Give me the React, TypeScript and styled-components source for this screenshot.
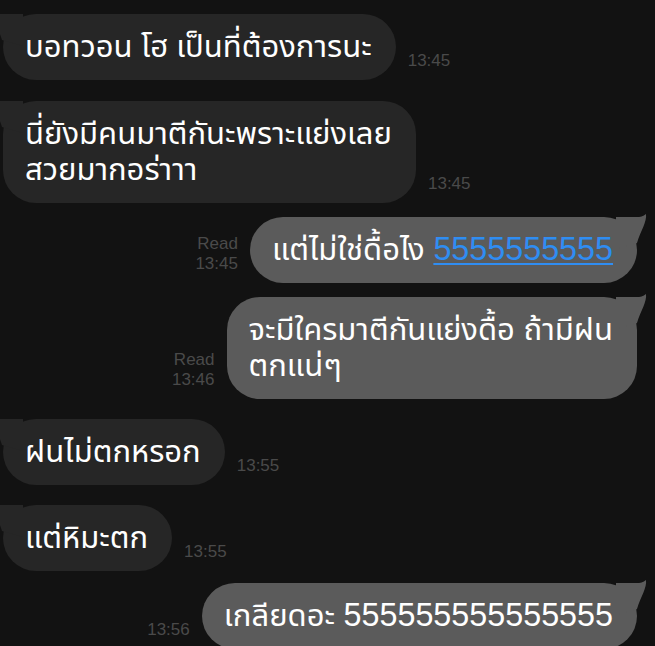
import React from "react";
import styled, { createGlobalStyle } from "styled-components";

const GlobalStyle = createGlobalStyle`
  html, body {
    margin: 0;
    padding: 0;
    background: #121212;
    overflow: hidden;
  }
  body {
    font-family: "Liberation Sans", "Noto Sans Thai", "Thonburi", "Loma", "Garuda", "Noto Sans", sans-serif;
  }
`;

const Chat = styled.div`
  display: flex;
  flex-direction: column;
  padding-top: 14px;
  width: 655px;
  height: 646px;
  box-sizing: border-box;
  overflow: hidden;
  background: #121212;
`;

const Row = styled.div<{ $side: "left" | "right"; $gap: number }>`
  display: flex;
  align-items: flex-end;
  justify-content: ${(p) => (p.$side === "right" ? "flex-end" : "flex-start")};
  margin-top: ${(p) => p.$gap}px;
  padding-left: 3px;
  padding-right: 18px;
  gap: 12px;
`;

const Bubble = styled.div<{ $side: "left" | "right" }>`
  position: relative;
  background: ${(p) => (p.$side === "right" ? "#5b5b5b" : "#262626")};
  color: #ffffff;
  border-radius: 33px;
  padding: 15px 24px 15px 22px;
  font-size: 31px;
  line-height: 36px;
  white-space: nowrap;
  order: ${(p) => (p.$side === "right" ? 2 : 1)};
`;

const Num = styled.span`
  font-size: 32.3px;
  line-height: 1;
`;

const Meta = styled.div<{ $side: "left" | "right" }>`
  display: flex;
  flex-direction: column;
  align-items: flex-end;
  color: #4a4a4a;
  font-size: 17px;
  line-height: 20px;
  margin-bottom: 9px;
  order: ${(p) => (p.$side === "right" ? 1 : 2)};
`;

const Link = styled(Num)`
  color: #2f8df2;
  text-decoration: underline;
  text-underline-offset: 3px;
  text-decoration-thickness: 2px;
`;

const TailSvg = styled.svg<{ $side: "left" | "right" }>`
  position: absolute;
  top: -4px;
  width: 34px;
  height: 36px;
  ${(p) => (p.$side === "right" ? "right: -13px;" : "left: -14px; transform: scaleX(-1);")}
`;

const Tail = ({ side }: { side: "left" | "right" }) => (
  <TailSvg $side={side} viewBox="0 0 34 36">
    <path
      d="M0 4 L14 4 C21 4 26 5 30 1 C31 9 25 17 21 30 L0 36 Z"
      fill={side === "right" ? "#5b5b5b" : "#262626"}
    />
  </TailSvg>
);

type Msg = {
  side: "left" | "right";
  gap: number;
  content: React.ReactNode;
  time: string;
  read?: boolean;
};

const messages: Msg[] = [
  { side: "left", gap: 0, content: "บอทวอน โฮ เป็นที่ต้องการนะ", time: "13:45" },
  {
    side: "left",
    gap: 21,
    content: (
      <>
        นี่ยังมีคนมาตีกันะพราะแย่งเลย
        <br />
        สวยมากอร่าาา
      </>
    ),
    time: "13:45",
  },
  {
    side: "right",
    gap: 14,
    content: (
      <>
        แต่ไม่ใช่ดื้อไง <Link>5555555555</Link>
      </>
    ),
    time: "13:45",
    read: true,
  },
  {
    side: "right",
    gap: 14,
    content: (
      <>
        จะมีใครมาตีกันแย่งดื้อ ถ้ามีฝน
        <br />
        ตกแน่ๆ
      </>
    ),
    time: "13:46",
    read: true,
  },
  { side: "left", gap: 20, content: "ฝนไม่ตกหรอก", time: "13:55" },
  { side: "left", gap: 20, content: "แต่หิมะตก", time: "13:55" },
  {
    side: "right",
    gap: 12,
    content: (
      <>
        เกลียดอะ <Num>555555555555555</Num>
      </>
    ),
    time: "13:56",
  },
];

export default function App() {
  return (
    <>
      <GlobalStyle />
      <Chat>
        {messages.map((m, i) => (
          <Row key={i} $side={m.side} $gap={m.gap}>
            <Bubble $side={m.side}>
              <Tail side={m.side} />
              {m.content}
            </Bubble>
            <Meta $side={m.side}>
              {m.read && <span>Read</span>}
              <span>{m.time}</span>
            </Meta>
          </Row>
        ))}
      </Chat>
    </>
  );
}
